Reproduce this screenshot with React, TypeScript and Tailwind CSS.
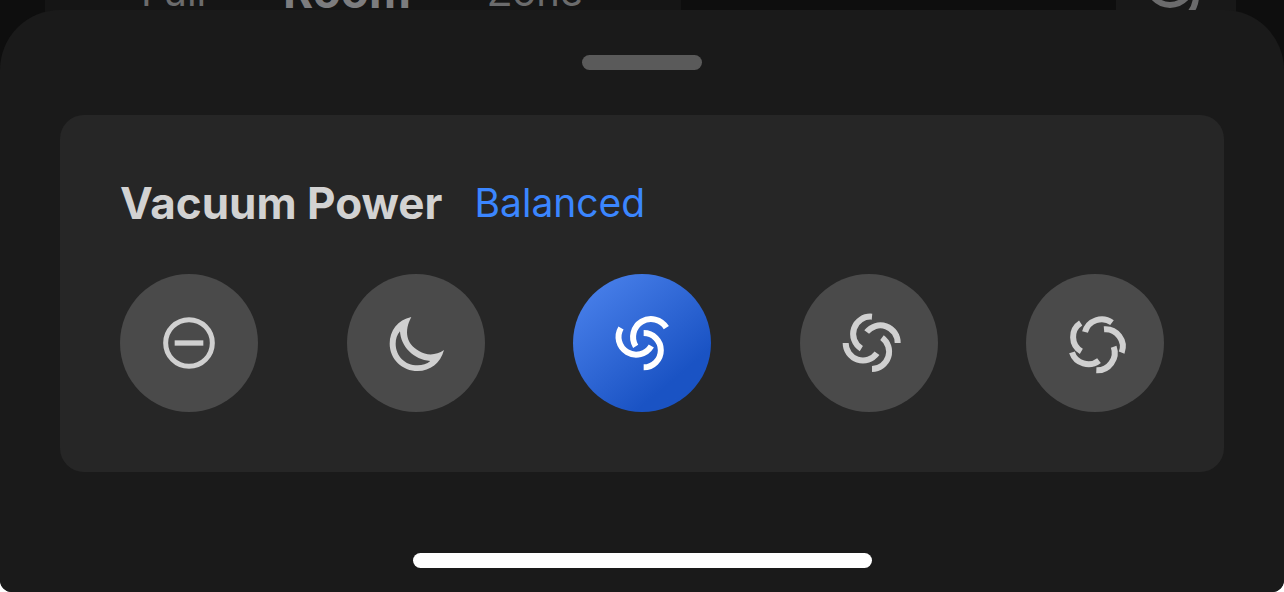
import React, { useState } from 'react';
import clsx from 'clsx';

interface PowerLevel {
  name: string;
  viewBox: string;
  icon: React.ReactNode;
}

const levels: PowerLevel[] = [
  {
    name: 'Off',
    viewBox: '0 0 234 234',
    icon: (
      <>
        <circle cx="117" cy="117" r="70" strokeWidth="15" />
        <path d="M74 117H160" strokeWidth="16" />
      </>
    ),
  },
  {
    name: 'Quiet',
    viewBox: '0 0 234 234',
    icon: (
      <path
        d="M103 39C62 48 38 80 38 119C38 165 76 201 122 201C160 201 190 178 201 138C178 154 150 156 126 141C88 120 80 82 103 39ZM69 82C71 127 110 168 160 171C150 180 136 184 122 184C84 184 56 156 56 119C56 105 60 92 69 82Z"
        fill="currentColor"
        fillRule="evenodd"
        stroke="none"
      />
    ),
  },
  {
    name: 'Balanced',
    viewBox: '0 0 234 234',
    icon: (
      <>
        <path d="M190 71A53 53 0 0 0 98 127" />
        <path d="M122 87A51 51 0 0 1 122 190" />
        <path d="M54 72A52 52 0 0 0 145 126" />
      </>
    ),
  },
  {
    name: 'Turbo',
    viewBox: '-6 0 234 234',
    icon: (
      <>
        <path d="M120 38A52 52 0 0 0 88 134" />
        <path d="M197 117A52 52 0 0 0 104 84" />
        <path d="M120 195A52 52 0 0 0 150 101" />
        <path d="M41 117A52 52 0 0 0 135 148" />
      </>
    ),
  },
  {
    name: 'Max',
    viewBox: '-6 0 234 234',
    icon: (
      <>
        <path d="M162 56A52 52 0 0 0 81 84" />
        <path d="M138 76A52 52 0 0 1 191 146" />
        <path d="M167 128A53 53 0 0 1 115 199" />
        <path d="M123 170A52 52 0 0 1 42 145" />
        <path d="M70 142A50 50 0 0 1 68 57" />
      </>
    ),
  },
];

const ModeBar = () => (
  <header className="flex h-[70px] items-start justify-between overflow-hidden pl-[45px] pr-12 text-[#6b6b6c]">
    <nav className="flex h-full w-[636px] items-start bg-[#151515] pl-24">
      <a href="#full" className="-mt-7 w-[142px] text-[40px] leading-10">Full</a>
      <a href="#room" className="-mt-8 w-[204px] text-[46px] font-bold leading-[46px] text-[#7c7c7e]">Room</a>
      <a href="#zone" className="-mt-7 text-[40px] leading-10">Zone</a>
    </nav>
    <button aria-label="Cleaning settings" className="h-full w-[120px] bg-[#181818]">
      <svg viewBox="0 0 120 70" className="h-[70px] w-[120px]" fill="none" stroke="currentColor" strokeWidth="6">
        <path d="M38 -2A22 22 0 0 0 70 -2" />
        <path d="M80 -4C80 2 78 8 74 13" />
      </svg>
    </button>
  </header>
);

export default function App() {
  const [selected, setSelected] = useState('Balanced');

  return (
    <div className="bg-white font-['Inter',sans-serif]">
      <div className="min-h-screen overflow-hidden rounded-b-xl bg-[#0e0e0e]">
        <ModeBar />

        <main className="relative -mt-[60px] flex flex-col items-center rounded-t-[60px] bg-[#1a1a1a] px-[60px] pb-6 pt-[45px]">
          <div className="h-[15px] w-[120px] rounded-full bg-[#5a5a5a]" />

          <section className="mt-[45px] w-full rounded-3xl bg-[#262626] p-[60px]">
            <div className="flex h-14 items-center gap-8">
              <h2 className="text-[44px] font-bold leading-[54px] text-[#d2d2d2]">Vacuum Power</h2>
              <span className="text-[39px] leading-[56px] text-[#3b86ff]">{selected}</span>
            </div>

            <div className="mt-[43px] flex justify-between">
              {levels.map((level) => (
                <button
                  key={level.name}
                  aria-label={level.name}
                  aria-pressed={selected === level.name}
                  onClick={() => setSelected(level.name)}
                  className={clsx(
                    'flex size-[138px] items-center justify-center rounded-full',
                    selected === level.name
                      ? 'bg-linear-140 from-[#4b82ec] from-5% to-[#1a53c4] to-75% text-white'
                      : 'bg-[#4a4a4a] text-[#d0d0d0]'
                  )}
                >
                  <svg viewBox={level.viewBox} className="size-[78px]" fill="none" stroke="currentColor" strokeWidth="18">
                    {level.icon}
                  </svg>
                </button>
              ))}
            </div>
          </section>

          <div className="mt-[81px] h-[15px] w-[459px] rounded-full bg-white" />
        </main>
      </div>
    </div>
  );
}
